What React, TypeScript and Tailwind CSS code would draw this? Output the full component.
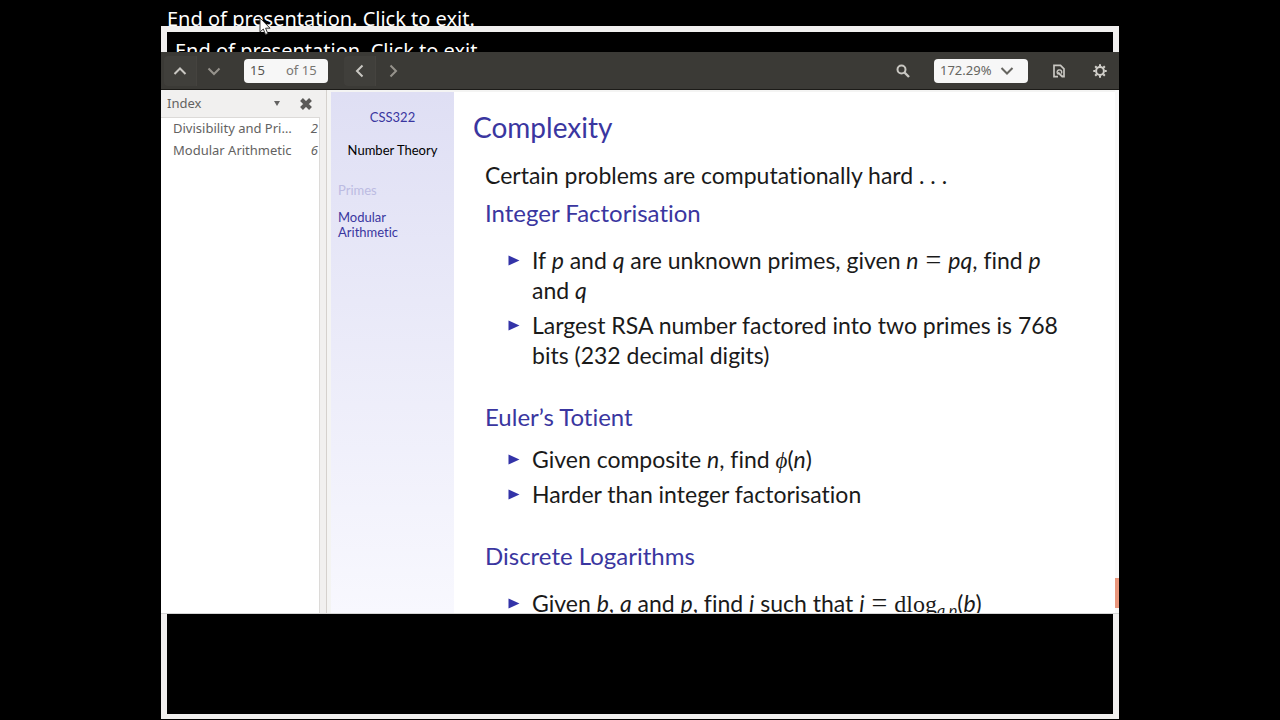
import type { ReactNode } from "react";

const outline = [
  { title: "Divisibility and Pri…", page: 2 },
  { title: "Modular Arithmetic", page: 6 },
];

function Bullet({ children }: { children: ReactNode }) {
  return (
    <li className="flex">
      <svg viewBox="0 0 10 10" className="mt-[10px] mr-[12px] h-[11px] w-[12px] shrink-0 fill-[#3333a8]" aria-hidden="true">
        <path d="M0 .5 10 5 0 9.500z" />
      </svg>
      <span>{children}</span>
    </li>
  );
}

function Equals() {
  return <span className="font-[Liberation_Serif,serif] text-[28px] leading-none"> = </span>;
}

function Chevron({ d, dim }: { d: string; dim?: boolean }) {
  return (
    <svg
      viewBox="0 0 14 14"
      className={dim ? "size-[14px] text-[#96938c]" : "size-[14px] text-[#c9c7c2]"}
      fill="none"
      stroke="currentColor"
      strokeWidth="2"
      aria-hidden="true"
    >
      <path d={d} />
    </svg>
  );
}

function Toolbar() {
  return (
    <div className="flex h-[38px] shrink-0 items-center border-b border-[#1c1b18] bg-[#3b3a36] pr-[4px] pl-[3px] text-[13px]">
      <button aria-label="Previous page" className="flex h-[30px] w-[33px] items-center justify-center rounded-l border-r border-[#45433f] bg-[#403f3b]">
        <Chevron d="M1.500 10 7 4.500 12.500 10" />
      </button>
      <button aria-label="Next page" className="flex h-[30px] w-[33px] items-center justify-center">
        <Chevron dim d="M1.500 4.500 7 10 12.500 4.500" />
      </button>
      <label className="ml-[14px] flex h-[24px] w-[84px] items-center rounded bg-[#f7f7f7] pl-[6px] text-[#777672]">
        <input aria-label="Page" defaultValue="15" className="w-[36px] bg-transparent text-[#55544f] outline-none" />
        <span className="whitespace-nowrap">of 15</span>
      </label>
      <button aria-label="Back" className="ml-[16px] flex h-[30px] w-[32px] items-center justify-center rounded-l border-r border-[#45433f] bg-[#403f3b]">
        <Chevron d="M9.500 1.500 4 7 9.500 12.500" />
      </button>
      <button aria-label="Forward" className="flex h-[30px] w-[33px] items-center justify-center">
        <Chevron dim d="M4.500 1.500 10 7 4.500 12.500" />
      </button>
      <button aria-label="Find" className="ml-auto flex size-[30px] items-center justify-center text-[#c9c7c2]">
        <svg viewBox="0 0 14 14" className="size-[14px]" fill="none" stroke="currentColor" strokeWidth="2" aria-hidden="true">
          <circle cx="5.500" cy="5.500" r="4" />
          <path d="m8.500 8.500 4.500 4.500" strokeWidth="2.400" />
        </svg>
      </button>
      <button aria-label="Zoom" className="ml-[16px] flex h-[24px] w-[94px] items-center rounded bg-[#f7f7f7] pl-[6px] text-[#666560]">
        172.29%
        <svg viewBox="0 0 14 14" className="ml-[9px] size-[14px]" fill="none" stroke="currentColor" strokeWidth="2" aria-hidden="true">
          <path d="M1.500 4 7 9.500 12.500 4" />
        </svg>
      </button>
      <button aria-label="Document options" className="ml-[16px] flex size-[30px] items-center justify-center text-[#c9c7c2]">
        <svg viewBox="0 0 14 14" className="size-[14px]" fill="none" stroke="currentColor" strokeWidth="1.700" aria-hidden="true">
          <path d="M6 12.700H2V1.300h6.500L12 4.800v7.900H10" />
          <path d="M9.300 9.500A2.300 2.300 0 1 0 6.500 10.300" strokeWidth="1.400" />
          <path d="M6 8.500 10.500 12.800" strokeWidth="2" />
        </svg>
      </button>
      <button aria-label="Settings" className="ml-[11px] flex size-[30px] items-center justify-center text-[#d2d0cb]">
        <svg viewBox="0 0 14 14" className="size-[14px]" fill="none" stroke="currentColor" aria-hidden="true">
          <circle cx="7" cy="7" r="3.900" strokeWidth="2" />
          <path d="M7 .3v2M7 11.700v2M.3 7h2M11.700 7h2M2.200 2.200l1.500 1.500M10.300 10.300l1.500 1.500M2.200 11.800l1.500-1.500M10.300 3.700l1.500-1.500" strokeWidth="2" />
        </svg>
      </button>
    </div>
  );
}

function IndexPane() {
  return (
    <aside className="flex w-[166px] shrink-0 flex-col border-r border-[#d5d1cd] bg-[#f1f0ef] pr-[6px] text-[13px] text-[#636261]">
      <div className="flex h-[27px] items-center pl-[6px]">
        <button className="flex flex-1 items-center justify-between">
          Index
          <svg viewBox="0 0 6 5" className="mr-[20px] h-[5px] w-[6px] fill-current" aria-hidden="true">
            <path d="M0 0h6L3 5z" />
          </svg>
        </button>
        <button aria-label="Close side pane" className="mr-[8px]">
          <svg viewBox="0 0 12 12" className="size-[12px]" stroke="#5b5a58" strokeWidth="4" aria-hidden="true">
            <path d="m1.500 1.500 9 9M10.500 1.500l-9 9" />
          </svg>
        </button>
      </div>
      <ul className="flex-1 border-t border-r border-[#dcdad8] bg-white pl-[12px]">
        {outline.map((item) => (
          <li key={item.page} className="flex h-[22px] items-center justify-between pr-px">
            <a href="#slide" className="whitespace-nowrap">{item.title}</a>
            <i>{item.page}</i>
          </li>
        ))}
      </ul>
    </aside>
  );
}

function Slide() {
  return (
    <main id="slide" className="flex min-w-0 flex-1 overflow-hidden border-t-2 border-l-4 border-[#f4f4f3] bg-white font-[Lato,sans-serif] [font-variant-ligatures:none]">
      <nav className="w-[123px] shrink-0 bg-linear-to-b from-[#dfdff4] to-[#f8f8fe] px-[7px] pt-[18px] text-[13px] leading-[15px] text-[#3a36a0]">
        <p className="text-center">CSS322</p>
        <p className="mt-[18px] text-center whitespace-nowrap text-black">Number Theory</p>
        <a href="#primes" className="mt-[25px] block text-[#bcbbe2]">Primes</a>
        <a href="#modular" className="mt-[12px] block w-[70px]">Modular Arithmetic</a>
      </nav>
      <article className="flex-1 pl-[19px] text-[23px] leading-[30px] whitespace-nowrap text-[#1a1a1a]">
        <h1 className="mt-[17px] text-[28px] leading-[36px] text-[#3a36a0]">Complexity</h1>
        <div className="pl-[12px]">
          <p className="mt-[15px]">Certain problems are computationally hard . . .</p>
          <h2 className="mt-[8px] text-[24px] text-[#3a36a0]">Integer Factorisation</h2>
          <ul className="mt-[17px] flex flex-col gap-[5px] pl-[23px]">
            <Bullet>
              If <i>p</i> and <i>q</i> are unknown primes, given <i>n</i>
              <Equals />
              <i>pq</i>, find <i>p</i>
              <br />
              and <i>q</i>
            </Bullet>
            <Bullet>
              Largest RSA number factored into two primes is 768
              <br />
              bits (232 decimal digits)
            </Bullet>
          </ul>
          <h2 className="mt-[32px] text-[24px] text-[#3a36a0]">Euler’s Totient</h2>
          <ul className="mt-[12px] flex flex-col gap-[5px] pl-[23px]">
            <Bullet>
              Given composite <i>n</i>, find <i className="font-[Liberation_Serif,serif] leading-none">ϕ</i>(<i>n</i>)
            </Bullet>
            <Bullet>Harder than integer factorisation</Bullet>
          </ul>
          <h2 className="mt-[32px] text-[24px] text-[#3a36a0]">Discrete Logarithms</h2>
          <ul className="mt-[17px] pl-[23px]">
            <Bullet>
              Given <i>b</i>, <i>a</i> and <i>p</i>, find <i>i</i> such that <i>i</i>
              <Equals />
              <span className="font-[Liberation_Serif,serif] text-[24px] leading-none">dlog</span>
              <sub className="text-[16px] leading-none italic">a,p</sub>(<i>b</i>)
            </Bullet>
          </ul>
        </div>
      </article>
    </main>
  );
}

export default function App() {
  return (
    <div className="relative flex h-screen flex-col overflow-hidden bg-black px-[161px] pb-px font-[Noto_Sans,sans-serif]">
      <p className="h-[26px] shrink-0 overflow-hidden pl-[6px] text-[20px] leading-[38px] whitespace-nowrap text-white">
        End of presentation. Click to exit.
      </p>
      <div className="h-[26px] shrink-0 overflow-hidden border-x-[6px] border-t-[6px] border-[#f1f0ef] pl-[8px] text-[20px] leading-[38px] whitespace-nowrap text-white">
        End of presentation. Click to exit.
      </div>
      <Toolbar />
      <div className="flex min-h-0 flex-1 border-b border-[#d5d5d5]">
        <IndexPane />
        <Slide />
        <div className="flex w-[4px] shrink-0 flex-col justify-end bg-[#f8f8f8] pb-[5px]">
          <div className="h-[30px] bg-[#e9967c]" />
        </div>
      </div>
      <div className="h-[105px] shrink-0 border-x-[6px] border-b-[5px] border-[#f1f0ef]" />
      <svg viewBox="0 0 12 19" className="absolute top-[17px] left-[259px] h-[19px] w-[12px]" fill="#fff" stroke="#333" strokeWidth="1" aria-hidden="true">
        <path d="M1 1v14l3.300-3 2.200 5.500 2.300-1-2.200-5.300H11z" />
      </svg>
    </div>
  );
}
